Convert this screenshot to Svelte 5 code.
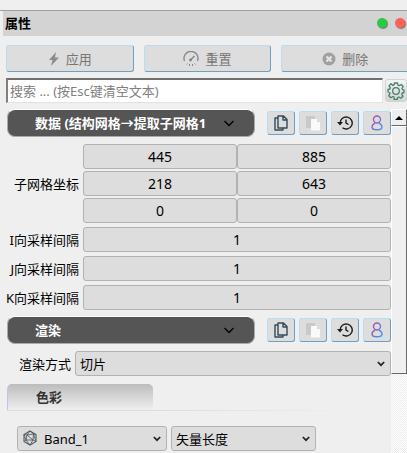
<section class="panel">
  <header class="titlebar">
    <h1>属性</h1>
    <button class="dot green" aria-label="浮动"></button>
    <button class="dot red" aria-label="关闭"></button>
  </header>

  <div class="actions">
    <button class="raised">
      <svg width="12" height="14" viewBox="0 0 12 14"><path d="M8 0 1 8h3.500L3 14l8-8.500H7z" fill="#8c8c8c" /></svg>
      应用
    </button>
    <button class="raised">
      <svg width="16" height="16" viewBox="0 0 16 16" fill="none" stroke="#858585">
        <path d="M1.500 10A7 7 0 1 1 14.500 10" stroke-width="1.300" />
        <path d="M3.500 13.500 4.500 12.500M6.500 15v-2M9.500 15v-2M12.500 13.500l-1-1" />
        <path d="m7.500 9 4-4" stroke-width="1.500" />
        <circle cx="7.500" cy="9" r="1" fill="#858585" />
      </svg>
      重置
    </button>
    <button class="raised">
      <svg width="14" height="14" viewBox="0 0 14 14">
        <circle cx="7" cy="7" r="6.500" fill="#a0a0a0" />
        <path d="m4.500 4.500 5 5m0-5-5 5" stroke="#e4e4e4" stroke-width="2.400" />
      </svg>
      删除
    </button>
  </div>

  <div class="search">
    <input type="text" aria-label="搜索" placeholder="搜索 ... (按Esc键清空文本)">
    <button class="gear" aria-label="高级">
      <svg width="18" height="18" viewBox="0 0 18 18" fill="none" stroke="#44816b" stroke-width="1.300" stroke-linejoin="round">
        <path d="M7.500 1h3l.5 2.200 1.200.5 2-1.200 2 2-1.200 2 .5 1.200L17 8v2.500l-1.800.5-.5 1.200 1.200 2-2 2-2-1.200-1.200.5-.5 2h-3L7 15l-1.200-.5-2 1.200-2-2 1.200-2L2.500 10.500 1 10V7.500L2.800 7l.5-1.200-1.200-2 2-2L6 3.500 7 3z" />
        <circle cx="9" cy="9" r="3.300" />
      </svg>
    </button>
  </div>

  <div class="scroll">
    <div class="content">
      {@render sectionBar('数据 (结构网格→提取子网格1')}

      <div class="fields">
        <span class="label" id="extent">子网格坐标</span>
        <div class="pairs" role="group" aria-labelledby="extent">
          {#each extent as value}
            <input type="text" aria-labelledby="extent" {value}>
          {/each}
        </div>
        {#each rates as rate}
          <label class="label" for="rate-{rate.axis}">{rate.axis}向采样间隔</label>
          <input type="text" id="rate-{rate.axis}" value={rate.value}>
        {/each}
      </div>

      {@render sectionBar('渲染')}

      <div class="mode">
        <label for="mode">渲染方式</label>
        <div class="select">
          <select id="mode"><option>切片</option></select>
          {@render arrow()}
        </div>
      </div>

      <h2 class="group"><span>色彩</span></h2>

      <div class="coloring">
        <div class="select band">
          <svg class="mesh" width="16" height="16" viewBox="0 0 16 16" fill="none" stroke="#555b64" stroke-width="1.100">
            <path d="M8 1 14 4.500v7L8 15l-6-3.500v-7z" />
            <path d="M8 1 5 5l6.500-1L8 1M5 5 2 4.500 4 10l1-5 6 5 .5-6L14 11.500 11 10l-7 0-2 1.500M4 10l4 5 3-5M11.500 4 14 4.500" stroke-width=".9" />
          </svg>
          <select aria-label="着色数组"><option>Band_1</option></select>
          {@render arrow()}
        </div>
        <div class="select">
          <select aria-label="分量"><option>矢量长度</option></select>
          {@render arrow()}
        </div>
      </div>
    </div>

    <div class="scrollbar">
      <button aria-label="向上滚动">
        <svg width="8" height="4" viewBox="0 0 8 4"><path d="M4 0 8 4H0z" /></svg>
      </button>
      <div class="thumb"></div>
    </div>
  </div>
</section>

{#snippet arrow()}
  <svg class="arrow" width="8" height="6" viewBox="0 0 8 6" fill="none" stroke="#222" stroke-width="1.700">
    <path d="m.8 1 3.200 3.200L7.200 1" />
  </svg>
{/snippet}

{#snippet sectionBar(title)}
  <div class="section">
    <button class="pill">
      <span>{title}</span>
      <svg width="10" height="7" viewBox="0 0 10 7" fill="none" stroke="#000" stroke-width="1.300">
        <path d="m.5 1 4.500 4.500L9.500 1" />
      </svg>
    </button>
    <button class="raised tool" aria-label="复制">
      <svg width="14" height="16" viewBox="0 0 14 16" fill="none" stroke="#34495b" stroke-width="1.400" stroke-linejoin="round">
        <path d="M4 3H1v12h8v-2" />
        <path d="M4 1h5.500L13 4.500V13H4zM9 1v4h4" />
      </svg>
    </button>
    <button class="raised tool" aria-label="粘贴">
      <svg width="16" height="16" viewBox="0 0 16 16">
        <path d="M1 1h9v12H1z" fill="#c9c9c9" />
        <path d="M6 4h6l3 3v8.500H6z" fill="#fafafa" />
        <path d="M12 4v3h3z" fill="#d6d6d6" />
      </svg>
    </button>
    <button class="raised tool" aria-label="恢复默认">
      <svg width="16" height="14" viewBox="0 0 16 14" fill="none" stroke="#1c1c1c" stroke-width="1.400">
        <path d="M3.200 7A6 6 0 1 1 5.500 11.700" />
        <path d="M9 3.500V7l2.500 1.500" />
        <path d="M0 6h6L3 9.500z" fill="#1c1c1c" stroke="none" />
      </svg>
    </button>
    <button class="raised tool" aria-label="保存为默认">
      <svg width="12" height="16" viewBox="0 0 12 16" fill="none" stroke="url(#user)" stroke-width="1.400">
        <defs>
          <linearGradient id="user" gradientUnits="userSpaceOnUse" x1="0" y1="4" x2="12" y2="12">
            <stop offset=".2" stop-color="#a354b8" />
            <stop offset=".9" stop-color="#4496e0" />
          </linearGradient>
        </defs>
        <circle cx="6" cy="4.500" r="3.500" />
        <path d="M4 8.200C2 9.200 1 10.500 1 12c0 2 2 2.800 5 2.800s5-.8 5-2.800c0-1.500-1-2.800-3-3.800" />
      </svg>
    </button>
  </div>
{/snippet}

<script>
  const extent = [445, 885, 218, 643, 0, 0]
  const rates = [
    { axis: 'I', value: 1 },
    { axis: 'J', value: 1 },
    { axis: 'K', value: 1 },
  ]
</script>

<style>
  :global(body) { background: #efefef; }

  .panel, .panel * { box-sizing: border-box; }
  .panel {
    display: flex;
    flex-direction: column;
    min-height: 100vh;
    padding-top: 10px;
    overflow: hidden;

    background: #efefef;
    color: #000;
    font: 13px/20px "Noto Sans", "Noto Sans CJK SC", sans-serif;
  }

  button, input, select {
    margin: 0;
    padding: 0;
    font: inherit;
    color: inherit;
  }
  svg { flex: none; display: block; }

  .titlebar {
    display: flex;
    align-items: center;
    gap: 8px;
    height: 26px;
    padding: 0 2px 2px 5px;
    border-top: 1px solid #a0a0a0;
    background: linear-gradient(to right, #efefef 3px, #d3d3d3 3px);
  }
  h1 {
    flex: 1;
    margin: 0;
    font-size: 13px;
    font-weight: bold;
  }
  .dot {
    width: 10px;
    height: 10px;
    border: 0;
    border-radius: 50%;
    box-shadow: 1px 1px 1px #777;
  }
  .green { background: #28ca42; }
  .red   { background: #ff6057; }

  .raised {
    display: flex;
    align-items: center;
    justify-content: center;
    border: 1px solid;
    border-color: #b9dcf5 #6f9fc3 #6f9fc3 #b9dcf5;
    border-radius: 3px;
    background: #ddd;
  }

  .actions {
    display: grid;
    grid-template-columns: repeat(3, 1fr);
    gap: 10px;
    margin: 9px -2px 6px 6px;
  }
  .actions .raised {
    gap: 6px;
    height: 27px;
    color: #777;
  }

  .search {
    display: flex;
    align-items: center;
    gap: 2px;
    margin-left: 6px;
  }
  .search input {
    flex: 1;
    min-width: 0;
    height: 25px;
    padding: 0 2px;
    border: 1px solid;
    border-width: 2px 1px 1px 2px;
    border-color: #707070 #e3e3e3 #e3e3e3 #808080;
    background: #fff;
  }
  .search input::placeholder { color: #808080; opacity: 1; }
  .gear {
    display: grid;
    place-items: center;
    width: 22px;
    height: 23px;
    border: 1px solid #d2d2d2;
    border-radius: 3px;
    background: linear-gradient(#f4f4f4, #d4d4d4);
  }

  .scroll {
    flex: 1;
    display: flex;
    margin-top: 6px;
  }
  .content {
    flex: 1;
    min-width: 0;
    padding-left: 7px;
  }

  .section {
    display: flex;
    align-items: center;
    gap: 4px;
  }
  .pill {
    flex: 1;
    display: flex;
    align-items: center;
    min-width: 0;
    height: 28px;
    margin-right: 8px;
    padding: 0 20px 0 27px;
    border: 1px solid;
    border-color: #fff #aaa #aaa #aaa;
    border-radius: 8px;
    background: #555;
    color: #fff;
    font-weight: bold;
  }
  .pill span {
    flex: 1;
    overflow: hidden;
    text-align: left;
    white-space: nowrap;
  }
  .tool {
    width: 28px;
    height: 24px;
  }

  .fields {
    display: grid;
    grid-template-columns: 72px 1fr;
    align-items: center;
    gap: 4px;
    margin: 7px 0 6px;
  }
  .label {
    justify-self: end;
    white-space: nowrap;
  }
  .fields input {
    width: 100%;
    min-width: 0;
    height: 25px;
    border: 1px solid #b2b2b2;
    border-radius: 3px;
    background: #ddd;
    font-size: 14px;
    text-align: center;
  }
  .pairs {
    display: grid;
    grid-template-columns: 1fr 1fr;
    row-gap: 2px;
  }

  .mode {
    display: flex;
    align-items: center;
    gap: 4px;
    margin: 7px 0 8px 12px;
  }
  .mode .select { flex: 1; }

  .select {
    position: relative;
  }
  select {
    display: block;
    width: 100%;
    height: 25px;
    padding: 0 20px 0 4px;
    appearance: none;
    border: 1px solid #b2b2b2;
    border-radius: 3px;
    background: #ddd;
  }
  .arrow {
    position: absolute;
    top: 10px;
    right: 6px;
    pointer-events: none;
  }
  .mesh {
    position: absolute;
    top: 4px;
    left: 5px;
    pointer-events: none;
  }
  .band select { padding-left: 26px; }

  .group {
    margin: 0 0 15px;
    border-bottom: 1px solid;
    border-image: linear-gradient(to right, #ddd 40%, #efefef 90%) 1;
    font-size: 13px;
    font-weight: bold;
    color: #333;
  }
  .group span {
    display: block;
    width: 38%;
    height: 26px;
    padding-left: 28px;
    border-left: 1px solid #c4c4f0;
    border-radius: 5px 5px 0 0;
    background: linear-gradient(#bcbcbc, #efefef);
    line-height: 27px;
  }

  .coloring {
    display: grid;
    grid-template-columns: 150fr 145fr;
    gap: 4px;
    margin: 0 75px 2px 10px;
  }

  .scrollbar {
    display: flex;
    flex-direction: column;
    width: 16px;
    background: repeating-conic-gradient(#fff 0 25%, #ececec 0 50%) 0 0 / 2px 2px;
  }
  .scrollbar button {
    display: grid;
    place-items: center;
    height: 17px;
    border: 1px solid;
    border-color: #fff #696969 #696969 #fff;
    background: #efefef;
  }
  .thumb {
    height: 72%;
    border: 1px solid;
    border-color: #fff #696969 #696969 #fff;
    background: #efefef;
  }
</style>
